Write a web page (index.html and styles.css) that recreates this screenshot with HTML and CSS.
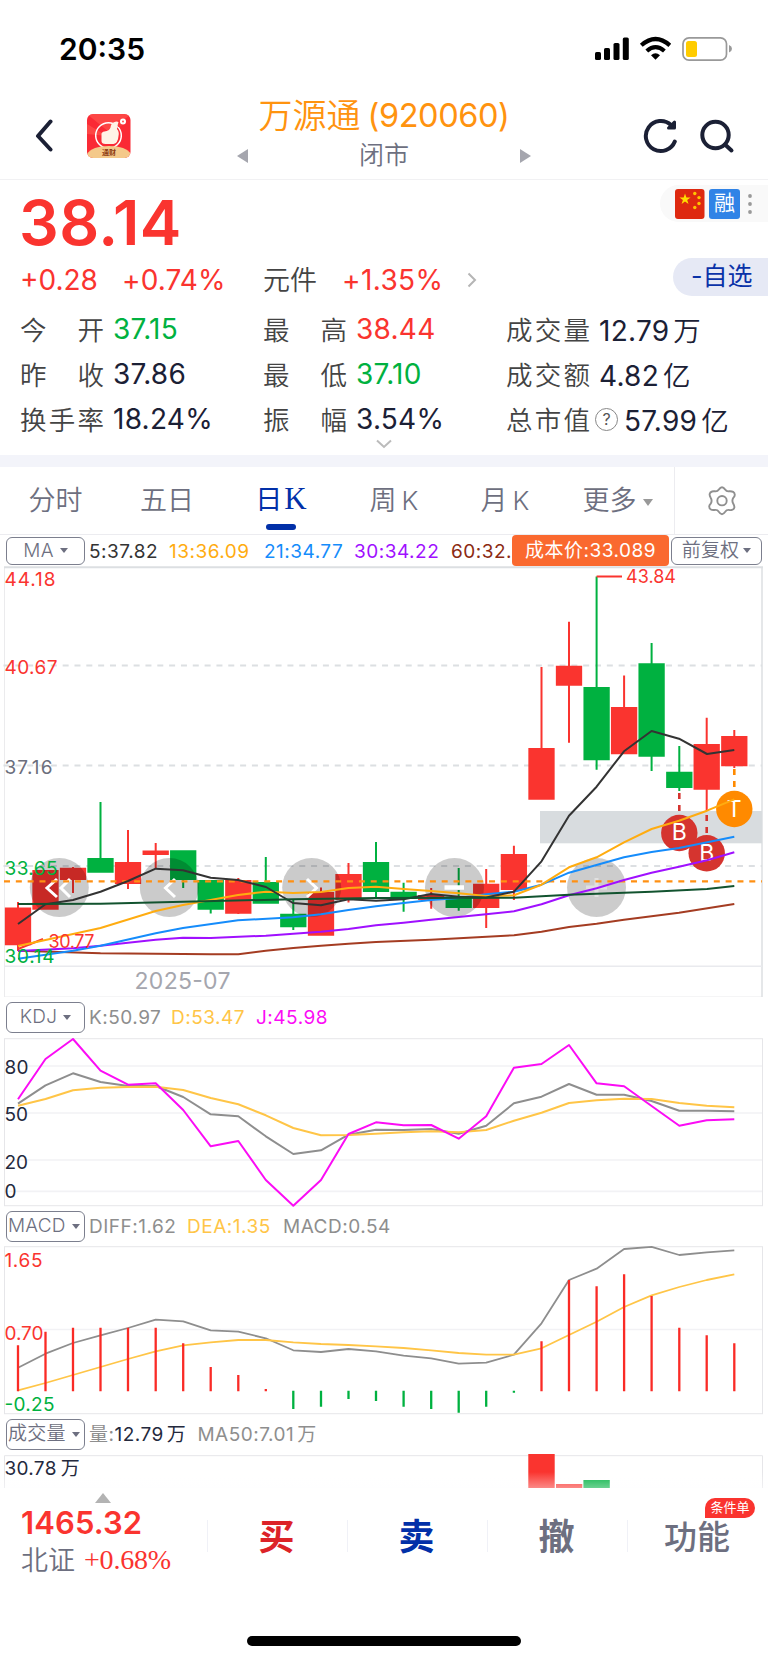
FILE: index.html
```html
<!DOCTYPE html>
<html lang="zh-CN">
<head>
<meta charset="utf-8">
<meta name="viewport" content="width=device-width, initial-scale=1">
<title>万源通 (920060)</title>
<link rel="stylesheet" href="styles.css">
</head>
<body>
<div class="phone">
  <header class="status">
    <span class="clock">20:35</span>
    <svg class="status-icons" width="140" height="28" viewBox="594 35 140 28">
      <g fill="#000"><rect x="595" y="52" width="6" height="8" rx="1.6"/><rect x="604" y="48" width="6" height="12" rx="1.6"/><rect x="613.500" y="43" width="6" height="17" rx="1.600"/><rect x="622.800" y="37.500" width="6" height="22.500" rx="1.600"/></g>
      <g fill="none" stroke="#000" stroke-width="4.200"><path d="M641.300 45.300Q655.500 32.700 669.800 45.300"/><path d="M646.800 51Q655.500 43.300 664.400 51"/></g>
      <path d="M651 55.200Q655.500 51.500 660 55.200L655.500 59.800Z"/>
      <rect x="683" y="37.800" width="43.500" height="22.400" rx="6" fill="none" stroke="#999" stroke-width="1.700"/>
      <path d="M729 45q3 1.200 3 3.700t-3 3.700z" fill="#999"/>
      <rect x="686" y="41" width="11" height="16" rx="2.500" fill="#fc0"/>
    </svg>
  </header>

  <nav class="topbar">
    <svg class="back" width="18" height="34" viewBox="0 0 18 34"><path d="M15.500 2.500 3 17l12.500 13.500" fill="none" stroke="#1b2035" stroke-width="4" stroke-linecap="round" stroke-linejoin="round"/></svg>
    <svg class="app" width="44" height="44" viewBox="0 0 44 44">
      <defs><clipPath id="appclip"><rect width="43.500" height="44" rx="6"/></clipPath></defs>
      <g clip-path="url(#appclip)">
        <rect width="44" height="44" fill="#fa2a35"/>
        <path d="M0 0H44L22 18ZM0 10 20 22 0 20Z" fill="#ff5a50" opacity=".6"/>
        <circle cx="21.500" cy="21.500" r="12.800" fill="none" stroke="#fff" stroke-width="1.500"/>
        <path d="M28 7l6-1 1 6-4 1z" fill="#fb3a3d"/>
        <path d="M14.500 20q0-2 3-2.500 5-.5 6-4 .5-4 3-5 3-1.500 5-.5-1 3-1.500 7 2.500 3 1.500 7-.5 7-5 8h-8q-4 0-4-3z" fill="#fff3e6"/>
        <circle cx="36" cy="7.500" r="3" fill="#fff"/><circle cx="36" cy="7.500" r="1" fill="#f55"/>
        <path d="M0 40Q5 32 22 32t22 8v4H0Z" fill="#f4c98a"/>
        <text x="22" y="41" class="app-name">通财</text>
      </g>
    </svg>
    <div class="title">
      <h1><span>万源通</span><b>(920060)</b></h1>
      <div class="market"><i class="tri-left"></i><span>闭市</span><i class="tri-right"></i></div>
    </div>
    <svg class="tools" width="92" height="38" viewBox="643 117 92 38" fill="none" stroke="#1b2035" stroke-width="4" stroke-linecap="round" stroke-linejoin="round">
      <path d="M674.800 141.500A15 15 0 1 1 671 125"/><path d="M674.500 122v6h-6z" fill="#1b2035" stroke-width="3"/>
      <circle cx="715.500" cy="135" r="13.200"/><path d="M725 144.500l6.500 6"/>
    </svg>
  </nav>

  <section class="quote">
    <div class="headline">
      <strong class="price">38.14</strong>
      <div class="flags">
        <svg width="30" height="30" viewBox="0 0 30 30"><rect width="29.500" height="30" rx="3" fill="#de2910"/><path d="M10 4.500l1.400 4h4.200l-3.400 2.500 1.300 4-3.500-2.400-3.400 2.400 1.300-4-3.400-2.500h4.200z" fill="#ffde00"/><g fill="#ffc400"><circle cx="19.800" cy="4.500" r="1.700"/><circle cx="24" cy="8.600" r="1.700"/><circle cx="24" cy="14.500" r="1.700"/><circle cx="19.800" cy="18.500" r="1.700"/></g></svg>
        <span class="margin-tag">融</span>
        <svg class="dots" width="6" height="22" viewBox="0 0 6 22" fill="#999"><circle cx="3" cy="3" r="1.900"/><circle cx="3" cy="11" r="1.900"/><circle cx="3" cy="19" r="1.900"/></svg>
      </div>
    </div>
    <div class="change">
      <span class="up chg">+0.28</span><span class="up pct">+0.74%</span>
      <span class="sector">元件</span><span class="up spct">+1.35%</span>
      <svg width="10" height="16" viewBox="0 0 10 16"><path d="M1.500 1.500 8 8l-6.500 6.500" fill="none" stroke="#b5b5b5" stroke-width="2"/></svg>
      <span class="watch">-自选</span>
    </div>
    <div class="stats">
      <div class="stat"><span class="lab"><i>今</i><i>开</i></span><span class="val down">37.15</span></div>
      <div class="stat"><span class="lab"><i>最</i><i>高</i></span><span class="val up">38.44</span></div>
      <div class="stat"><span class="lab"><i>成</i><i>交</i><i>量</i></span><span class="val">12.79<em>万</em></span></div>
      <div class="stat"><span class="lab"><i>昨</i><i>收</i></span><span class="val">37.86</span></div>
      <div class="stat"><span class="lab"><i>最</i><i>低</i></span><span class="val down">37.10</span></div>
      <div class="stat"><span class="lab"><i>成</i><i>交</i><i>额</i></span><span class="val">4.82<em>亿</em></span></div>
      <div class="stat"><span class="lab"><i>换</i><i>手</i><i>率</i></span><span class="val">18.24%</span></div>
      <div class="stat"><span class="lab"><i>振</i><i>幅</i></span><span class="val">3.54%</span></div>
      <div class="stat"><span class="lab"><i>总</i><i>市</i><i>值</i></span><span class="help">?</span><span class="val">57.99<em>亿</em></span></div>
    </div>
    <svg class="expand" width="18" height="10" viewBox="0 0 18 10"><path d="M2 1.500 9 8l7-6.500" fill="none" stroke="#bbb" stroke-width="2"/></svg>
  </section>

  <div class="gap"></div>

  <nav class="tabs">
    <span class="tab">分时</span>
    <span class="tab">五日</span>
    <span class="tab active">日<b>K</b></span>
    <span class="tab">周<b>K</b></span>
    <span class="tab">月<b>K</b></span>
    <span class="tab more">更多<i class="caret"></i></span>
    <span class="gear"><svg width="30" height="32" viewBox="0 0 30 32" fill="none" stroke="#8f8f8f" stroke-width="1.900" stroke-linejoin="round"><path d="M11.800 4.600Q15 0 18.200 4.600 19.500 6.600 21.800 6.300 27.500 5.800 27.800 9.700 27.800 11.300 26.300 12.800 24.500 15.700 26.300 18.700 29 23.500 25 24.900 23.800 25.300 21.800 24.900 19.400 24.800 18.200 26.800 15 31.600 11.800 26.800 10.600 24.800 8.200 24.900 2.500 25.800 2.200 21.500 2.200 20.300 3.700 18.700 5.500 15.700 3.700 12.800 1 8 5 6.500 6.200 6 8.200 6.300 10.500 6.600 11.800 4.600Z"/><circle cx="15" cy="15.700" r="4.700"/></svg></span>
  </nav>

  <section class="legend ma">
    <span class="select">MA<i class="caret"></i></span>
    <span class="m5">5:37.82</span><span class="m13">13:36.09</span><span class="m21">21:34.77</span><span class="m30">30:34.22</span><span class="m60">60:32.</span>
    <span class="cost"><span>成本价</span>:33.089</span>
    <span class="select adjust">前复权<i class="caret"></i></span>
  </section>

  <svg class="chart" width="768" height="431" viewBox="0 566 768 431">
    <path d="M4.500 567V997M4 997H762" stroke="#ebebed" fill="none"/>
    <path d="M4 567.200H763" stroke="#dcdfe2" stroke-width="2"/><path d="M762 567V997" stroke="#dcdfe2" stroke-width="1.500"/>
    <path d="M4 966.300H762" stroke="#e9eaee" stroke-width="1.500"/>
    <rect x="540" y="811" width="222" height="32.300" fill="#d8dcdf"/>
    <path d="M3.500 665.500H762M3.500 765.500H762M3.500 866H762" stroke="#dcdfe2" stroke-width="2" stroke-dasharray="6 5.830"/>
    <g fill="none" stroke="#fa342f">
      <path stroke-width="2" d="M18 902V951M73 867V893M128 830V889M155.700 843V868M238.300 878V914M321 887.500V900M348.500 863V902.500M431.200 888V908.700M458.700 888V889M486.200 869V928M513.900 845.700V900M541.500 667V799M569 621.700V742.700M624.100 675.500V754M706.700 717.700V811M734.300 730V768"/>
      <path stroke-width="26.300" d="M18 907.500V945.300M45.500 870V909.700M73 867.700V880M128 862V884M155.700 850.500V855M238.300 880V913.700M321 892V935.700M348.500 874V900M431.200 895V900M486.200 883.700V908M513.900 854V890M541.500 748V799.700M569 665.700V685.700M624.100 707V754.300M706.700 744V789.700M734.300 736V766.300"/>
    </g>
    <g fill="none" stroke="#00b140">
      <path stroke-width="2" d="M100.500 802V872M183.200 851V888M210.700 880V913.500M265.800 857V903M293.300 900V930M376 842V898M403.600 882.700V911.700M458.700 868V886M458.700 890V910.700M596.600 576.500V769.700M651.600 643V771M679.300 746V791"/>
      <path stroke-width="26.300" d="M100.500 858V872.700M183.200 850.300V880M210.700 880V909.700M265.800 882V903.700M293.300 913.700V927.300M376 862V892M403.600 891.700V899M458.700 896.700V908M596.600 687V760.300M651.600 663.300V756.700M679.300 771.700V788"/>
    </g>
    <path d="M596.600 576.500H622M18 949 43 939" stroke="#fa342f" stroke-width="2" fill="none"/>
    <g fill="#000" opacity=".2"><circle cx="59.300" cy="887.500" r="29.500"/><circle cx="169.300" cy="887.500" r="29.500"/><circle cx="311.700" cy="887.500" r="29.500"/><circle cx="454.500" cy="887.500" r="29.500"/><circle cx="596.500" cy="887.500" r="29.500"/></g>
    <g fill="none" stroke="#fff" stroke-width="3"><path d="M57 879 47 888l10 9M70 879l-9 9 9 9M175 879l-9.500 9 9.500 9M307 879l9.500 9-9.500 9"/><path d="M444.500 887.500H464" stroke-width="4.500"/><path d="M586 887.500h21M596.500 878v19" stroke-width="4" opacity=".4"/></g>
    <path d="M4 881.300H762" stroke="#ff9012" stroke-width="2.200" stroke-dasharray="6 5.830"/>
    <path d="M679.300 793V814M706.700 815V834" stroke="#d5342f" stroke-width="2.600" stroke-dasharray="6 6"/>
    <path d="M734.300 769V791" stroke="#ff8a00" stroke-width="2.600" stroke-dasharray="6 6"/>
    <g class="marker"><circle cx="679.300" cy="833" r="18.200" fill="#d5342f"/><text x="679.300" y="840.300">B</text><circle cx="706.700" cy="853.300" r="18.200" fill="#d5342f"/><text x="706.700" y="861">B</text><circle cx="734.300" cy="809" r="18.200" fill="#ff8a00"/><text x="734.300" y="817">T</text></g>
    <g class="lines" stroke-width="2">
      <polyline stroke="#a43c22" points="18,950.700 100.500,953.300 155.700,953.700 210.700,954.300 238.300,954.300 265.800,950.700 293.300,948 321,945.700 348.500,943.700 376,942 431,939.700 514,935.300 541.500,931.700 569,927 596.600,923.700 624,919.700 679,912.700 734.300,904"/>
      <polyline stroke="#a010ff" points="18,951 73,948.300 100.500,945.700 128,942.700 155.700,939.700 183,937.700 210.700,938 265.800,935.700 321,931.700 348.500,929 376,925.300 403.600,922.700 431,919.700 486,914.300 514,911.300 541.500,904.300 569,895.300 596.600,888.300 624,880 651.600,872.700 679,866.700 707,860.300 734.300,852.300"/>
      <polyline stroke="#158cfb" points="18,958.700 73,950.700 100.500,945.700 155.700,933.300 183,928 238,920.300 293,917.300 321,914.300 348.500,910 376,906.300 403.600,903 431,900 458.700,898 486,894.300 514,891.700 541.500,884.700 569,872.700 624,857.300 651.600,852 679,848 734.300,836.700"/>
      <polyline stroke="#ffac10" points="18,946 100.500,928 155.700,911 183,905 238,895 266,891.700 293,893 321,892 348.500,888 376,886.700 403.600,889 431,891 458.700,893.300 486,896 514,895.300 541.500,884.700 569,867.300 596.600,857.300 624,842.300 651.600,829 679,820.700 707,810.700 734.300,799.300"/>
      <polyline stroke="#333" points="18,924 45.500,904.300 73,900 100.500,891.700 128,881 155.700,868.700 183,870.300 210.700,877.700 238,880 266,887 293,903 321,905.300 348.500,899.300 376,900.700 403.600,899.300 431,894 458.700,896.700 486,897.500 514,891.700 541.500,861.300 569,815.700 596.600,786.700 624,751.300 651.600,731 679,738.700 707,754 734.300,750"/>
      <polyline stroke="#12532f" points="18,904 100.500,903.700 183,901.700 293,899.300 376,898 514,897.700 569,894.700 651.600,891.700 707,889 734.300,886"/>
    </g>
    <g class="axis">
      <text class="red" x="4.500" y="585.500" textLength="51">44.18</text><text class="red" x="4.500" y="674" textLength="53">40.67</text><text fill="#6b6e7c" x="4.500" y="774" textLength="48">37.16</text><text class="green" x="4.500" y="874.500" textLength="53">33.65</text><text class="green" x="4.500" y="963" textLength="50">30.14</text>
      <text class="red small" x="48.500" y="948" textLength="46">30.77</text><text class="red small" x="626" y="582.500" textLength="50">43.84</text>
      <text class="date" x="134.500" y="989" textLength="96">2025-07</text>
    </g>
  </svg>

  <section class="legend kdj">
    <span class="select">KDJ<i class="caret"></i></span>
    <span class="k">K:50.97</span><span class="d">D:53.47</span><span class="j">J:45.98</span>
  </section>

  <svg class="chart" width="768" height="169" viewBox="0 1038 768 169">
    <path d="M4 1066H762M4 1113H762M4 1160H762M4 1191.300H762" stroke="#f2f2f5" stroke-width="1.700"/>
    <rect x="4.500" y="1038.700" width="758" height="167" fill="none" stroke="#e6e6e9"/>
    <g class="lines" stroke-width="2">
      <polyline stroke="#8e8e8e" points="18,1103.700 45.500,1085.300 73,1073.300 100.500,1082 128,1086 155.700,1086 183.200,1097 210.700,1114.300 238.300,1116.300 265.800,1136.300 293.300,1154 321,1150.300 348.500,1134.700 376,1129.700 403.600,1130 431.200,1129 458.700,1133.700 486.200,1125.700 513.900,1103.300 541.500,1096.700 569,1084 596.600,1094.700 624.100,1094.700 651.600,1101 679.300,1110.700 706.700,1110.700 734.300,1111.300"/>
      <polyline stroke="#ffc547" points="18,1105.700 45.500,1099 73,1090.300 100.500,1087.700 128,1087 155.700,1086.700 183.200,1090 210.700,1098 238.300,1104.300 265.800,1115.300 293.300,1128 321,1135.300 348.500,1135 376,1133.700 403.600,1132.300 431.200,1131.300 458.700,1132.300 486.200,1130 513.900,1120.700 541.500,1112.700 569,1103 596.600,1100.300 624.100,1098.700 651.600,1099 679.300,1103 706.700,1105.700 734.300,1107.300"/>
      <polyline stroke="#fb0cf5" points="18,1099.300 45.500,1059 73,1039 100.500,1070.700 128,1084.700 155.700,1083.300 183.200,1110 210.700,1146.300 238.300,1141 265.800,1180 293.300,1205.700 321,1180 348.500,1134 376,1122.300 403.600,1125.300 431.200,1125 458.700,1138.700 486.200,1116.300 513.900,1067.700 541.500,1064 569,1045 596.600,1083.300 624.100,1086.300 651.600,1106 679.300,1125.700 706.700,1120.300 734.300,1119.300"/>
    </g>
    <g class="axis" fill="#24293d"><text x="4.500" y="1073.500" textLength="24">80</text><text x="4.500" y="1121" textLength="23.500">50</text><text x="4.500" y="1168.500" textLength="23.500">20</text><text x="4.500" y="1197.700">0</text></g>
  </svg>

  <section class="legend macd">
    <span class="select">MACD<i class="caret"></i></span>
    <span class="k">DIFF:1.62</span><span class="d">DEA:1.35</span><span class="k">MACD:0.54</span>
  </section>

  <svg class="chart" width="768" height="169" viewBox="0 1246 768 169">
    <path d="M4 1329.500H762" stroke="#f2f2f5" stroke-width="1.700"/>
    <rect x="4.500" y="1246.700" width="758" height="167" fill="none" stroke="#e6e6e9"/>
    <g class="lines" stroke-width="1.800">
      <polyline stroke="#8e8e8e" points="18,1367.700 45.500,1353.700 73,1343 100.500,1335.300 128,1328 155.700,1319.700 183.200,1321.300 210.700,1330.300 238.300,1331.700 265.800,1338.300 293.300,1350.300 321,1352 348.500,1349 376,1351.300 403.600,1355.700 431.200,1358.300 458.700,1363.700 486.200,1362.700 513.900,1354.700 541.500,1323.300 569,1280 596.600,1268.700 624.100,1249 651.600,1246.900 679.300,1255 706.700,1252.300 734.300,1250.300"/>
      <polyline stroke="#ffc547" points="18,1390.300 45.500,1383 73,1375 100.500,1367 128,1359 155.700,1351.300 183.200,1345.300 210.700,1342.300 238.300,1340 265.800,1340 293.300,1342.300 321,1344 348.500,1345 376,1346.300 403.600,1348 431.200,1350.300 458.700,1353 486.200,1354.700 513.900,1354.700 541.500,1348.300 569,1335 596.600,1321.700 624.100,1307 651.600,1295.300 679.300,1287 706.700,1280 734.300,1274.300"/>
    </g>
    <path stroke="#fa2b26" stroke-width="2.300" d="M18 1345.300V1391.300M45.500 1331.700V1391.300M73 1327.700V1391.300M100.500 1327.700V1391.300M128 1327.700V1391.300M155.700 1327.700V1391.300M183.200 1343.300V1391.300M210.700 1367V1391.300M238.300 1375V1391.300M265.800 1389V1391.300M541.500 1341.300V1391.300M569 1280V1391.300M596.600 1286.300V1391.300M624.100 1274.300V1391.300M651.600 1296V1391.300M679.300 1327.700V1391.300M706.700 1335.300V1391.300M734.300 1343.300V1391.300"/>
    <path stroke="#00b140" stroke-width="2.300" d="M293.300 1390.700V1409M321 1390.700V1406.700M348.500 1390.700V1399M376 1390.700V1401M403.600 1390.700V1406.700M431.200 1390.700V1409M458.700 1390.700V1412.700M486.200 1390.700V1406.700M513.900 1390.700V1392.700"/>
    <g class="axis"><text class="red" x="4.500" y="1266.500" textLength="38">1.65</text><text class="red" x="4.500" y="1339.500" textLength="39">0.70</text><text class="green" x="4.500" y="1410.500" textLength="50">-0.25</text></g>
  </svg>

  <section class="legend vol">
    <span class="select">成交量<i class="caret"></i></span>
    <span class="k">量:<b>12.79<em>万</em></b></span><span class="k m50">MA50:7.01<em>万</em></span>
  </section>

  <svg class="chart" width="768" height="35" viewBox="0 1453 768 35">
    <defs><linearGradient id="fade" x2="0" y2="1"><stop stop-color="#fff" stop-opacity="0"/><stop offset="1" stop-color="#fdfdff" stop-opacity=".42"/></linearGradient></defs>
    <path d="M4.500 1488V1455.700H762.500V1488" fill="none" stroke="#e6e6e9"/>
    <path d="M528.300 1454h26.400v34h-26.400zM556 1484h26.300v4H556z" fill="#fa342f"/><path d="M583.400 1480h26.400v8h-26.400z" fill="#00b140"/>
    <rect y="1472" width="768" height="16" fill="url(#fade)"/>
    <g class="axis"><text x="4.500" y="1475" fill="#24293d" letter-spacing=".3">30.78<tspan dx="4">万</tspan></text></g>
  </svg>

  <footer class="trade">
    <div class="index">
      <i class="tri-up"></i>
      <strong>1465.32</strong>
      <span class="market-index">北证<b>+0.68%</b></span>
    </div>
    <span class="action buy">买</span>
    <span class="action sell">卖</span>
    <span class="action">撤</span>
    <span class="action func">功能<small>条件单</small></span>
  </footer>
  <div class="home"></div>
</div>
</body>
</html>
```
FILE: styles.css
```css
* { box-sizing: border-box; }
body { margin: 0; background: #fff; font-family: Inter, "Noto Sans CJK SC", sans-serif; }
i, em, b, strong, h1, small { font-style: normal; font-weight: inherit; font-size: inherit; margin: 0; }
svg { display: block; flex: none; }
.phone { width: 768px; height: 1663px; display: flex; flex-direction: column; overflow: hidden; white-space: nowrap; color: #1b2035; }
.phone > * { flex: none; }
.up, .red { color: #fa342f; fill: #fa342f; }
.down, .green { color: #00b140; fill: #00b140; }

.status { height: 98px; padding: 0 34px 0 59px; display: flex; align-items: center; justify-content: space-between; color: #000; }
.clock { font-size: 30px; font-weight: 600; line-height: 30px; letter-spacing: 0; }

.topbar { height: 82px; border-bottom: 1.500px solid #f1f1f3; display: flex; padding-left: 35px; }
.back { margin-top: 21px; }
.app { margin: 16px 0 0 34px; }
.app-name { font: 700 7px "Noto Sans CJK SC", sans-serif; fill: #8c3b12; text-anchor: middle; }
.title { width: 294px; margin-left: 106px; display: flex; flex-direction: column; align-items: center; }
.title h1 { color: #ff930f; font-size: 34px; line-height: 36px; height: 42px; padding-bottom: 7px; display: flex; align-items: center; gap: 7px; font-weight: 350; }
.title h1 b { font-size: 32.500px; letter-spacing: -.4px; font-weight: 380; }
.market { width: 100%; display: flex; justify-content: space-between; align-items: center; height: 32px; color: #6d6f80; font-size: 25px; line-height: 28px; font-weight: 350; }
.market span { padding-bottom: 2px; }
.tri-left, .tri-right { border: 7px solid transparent; width: 0; height: 0; }
.tri-left { border-right: 11px solid #a5a6ae; border-left: 0; }
.tri-right { border-left: 11px solid #a5a6ae; border-right: 0; }
.tools { margin: 19px 0 0 112px; }

.quote { height: 275px; position: relative; }
.headline { height: 75px; display: flex; justify-content: space-between; padding-left: 19px; }
.price { font-size: 62.500px; line-height: 75px; padding-top: 5px; font-weight: 600; color: #fa342f; letter-spacing: .4px; }
.flags { margin-top: 5px; width: 108px; height: 37px; border-radius: 19px 0 0 19px; background: #f9f9f9; display: flex; align-items: center; padding-left: 15px; }
.margin-tag { width: 31px; height: 30px; margin: 0 7px 0 4px; border-radius: 3px; background: #3083e6; color: #fff; font-size: 21px; line-height: 28px; text-align: center; }
.change { height: 50px; display: flex; align-items: center; padding-left: 20px; font-size: 28px; font-weight: 380; }
.chg { width: 102px; letter-spacing: 0; }
.pct { width: 141px; letter-spacing: .1px; }
.sector { width: 79px; font-size: 27px; color: #444; font-weight: 350; padding-bottom: 3px; }
.spct { width: 125px; letter-spacing: .4px; }
.watch { margin: 0 0 6px auto; width: 95px; height: 38px; border-radius: 19px 0 0 19px; background: #e6e9f5; color: #0a32a8; font-size: 25px; line-height: 36px; padding-left: 18px; font-weight: 400; }
.stats { display: grid; grid-template-columns: 243px 243px auto; grid-auto-rows: 45.300px; padding-left: 20px; margin-top: 1px; }
.stat { display: flex; align-items: center; font-size: 28px; font-weight: 380; }
.lab { width: 84px; margin-right: 9px; display: flex; justify-content: space-between; color: #444; font-size: 26.500px; font-weight: 350; padding-bottom: 1px; }
.val { letter-spacing: .25px; }
.val em { font-size: 27.500px; margin-left: 4px; font-weight: 350; }
.help { width: 23px; height: 23px; border: 1.500px solid #888; border-radius: 50%; color: #555; font-size: 16px; line-height: 20px; text-align: center; margin: 0 6px 0 -4px; }
.expand { position: absolute; left: 375px; top: 259px; }

.gap { height: 12px; background: #f3f4fa; }

.tabs { height: 68px; border-bottom: 1.500px solid #ececf0; display: grid; grid-template-columns: 111px 112px 116px 110px 112px 113px 94px; align-items: center; text-align: center; font-size: 27px; color: #6d6f80; font-weight: 350; }
.tab { height: 67px; line-height: 67px; position: relative; }
.tab b { margin-left: 5px; font-size: 26px; font-weight: 350; }
.active { color: #0230a8; font-weight: 400; line-height: 64px; }
.tab.active b { font-family: "Liberation Serif", serif; font-size: 31px; margin-left: 2px; font-weight: 400; }
.active::after { content: ""; position: absolute; left: 43px; bottom: 4px; width: 30px; height: 6px; border-radius: 3px; background: #0230a8; }
.caret { display: inline-block; border: 4px solid transparent; border-top: 5px solid #6d6f80; border-bottom: 0; vertical-align: middle; margin-left: 6px; }
.more .caret { border-width: 7px 5px 0; border-top-color: #999; }
.gear { height: 67px; border-left: 1px solid #ececf0; display: flex; align-items: center; justify-content: center; }

.legend { display: flex; align-items: center; font-size: 19px; letter-spacing: .5px; padding-left: 6px; color: #8e8e8e; font-weight: 380; line-height: 22px; }
.legend > span { flex: none; padding-top: 2px; }
.legend > .select { width: 79px; height: 31px; padding-top: 0; border: 1.500px solid #7c7f8e; border-radius: 6px; color: #6d6f80; display: flex; align-items: center; justify-content: center; margin-right: 4px; letter-spacing: .2px; background: #fff; font-weight: 350; }
.select .caret { margin-left: 6px; }
.legend.ma > .select { height: 28px; }
.m5 { width: 80px; color: #333; }
.m13 { width: 95px; color: #ffac10; }
.m21 { width: 90px; color: #158cfb; }
.m30 { width: 97px; color: #a010ff; }
.m60 { width: 61px; color: #8b2a12; }
.legend > .cost { width: 157px; height: 31px; padding-top: 0; line-height: 31px; border-radius: 4px; background: #fa692f; color: #fff; text-align: center; }
.legend > .adjust { width: 91px; margin: 0 0 0 2px; }
.legend .adjust .caret { margin-left: 4px; }
.kdj { height: 41px; padding-bottom: 1px; }
.macd { height: 39px; padding-bottom: 1px; }
.vol { height: 38px; }
.d { color: #ffc547; }
.j { color: #fb0cf5; }
.kdj .k { width: 82px; } .kdj .d { width: 85px; }
.macd .d { width: 96px; }
.macd .k { width: 98px; }
.legend.macd > .select, .legend.vol > .select { justify-content: space-between; padding: 0 4px 0 1px; }
.vol b { color: #24293d; }
.vol em { margin-left: 3px; }
.m50 { margin-left: 11px; }

.lines { fill: none; stroke-linejoin: round; }
.axis text { font-family: Inter, "Noto Sans CJK SC", sans-serif; font-size: 19px; font-weight: 380; }
.axis .small { font-size: 18px; }
.axis .date { font-size: 23px; fill: #a5a6ae; }
.marker text { font: 400 23px Inter, sans-serif; fill: #fff; text-anchor: middle; }

.trade { height: 120px; background: #fff; display: grid; grid-template-columns: 207px 140px 140px 140px 141px; align-items: start; padding-top: 5px; }
.index { padding-left: 21px; display: flex; flex-direction: column; }
.tri-up { width: 0; height: 0; border: 8px solid transparent; border-top: 0; border-bottom: 10px solid #b3b3b3; margin-left: 74px; }
.index strong { font-size: 31px; line-height: 39px; font-weight: 600; color: #fa342f; letter-spacing: .1px; }
.market-index { font-size: 27px; line-height: 37px; color: #6d6f80; font-weight: 350; }
.market-index b { font-family: "Liberation Serif", serif; font-size: 28px; color: #fa342f; margin-left: 9px; font-weight: 400; letter-spacing: -.2px; position: relative; top: -1px; }
.action { margin-top: 27px; height: 32px; line-height: 34px; border-left: 1.500px solid #f0f1f7; padding-right: 2px; text-align: center; font-size: 36px; font-weight: 700; color: #6d6f80; position: relative; }
.buy { color: #dc2328; } .sell { color: #0230a8; }
.func { font-size: 33px; font-weight: 500; }
.func small { position: absolute; left: 77px; top: -22px; width: 50px; height: 20px; border-radius: 10px 10px 10px 0; background: #fa342f; color: #fff; font-size: 13px; line-height: 19px; font-weight: 400; }
.home { width: 274px; height: 10px; margin: 28px 0 0 247px; border-radius: 5px; background: #000; }
```
